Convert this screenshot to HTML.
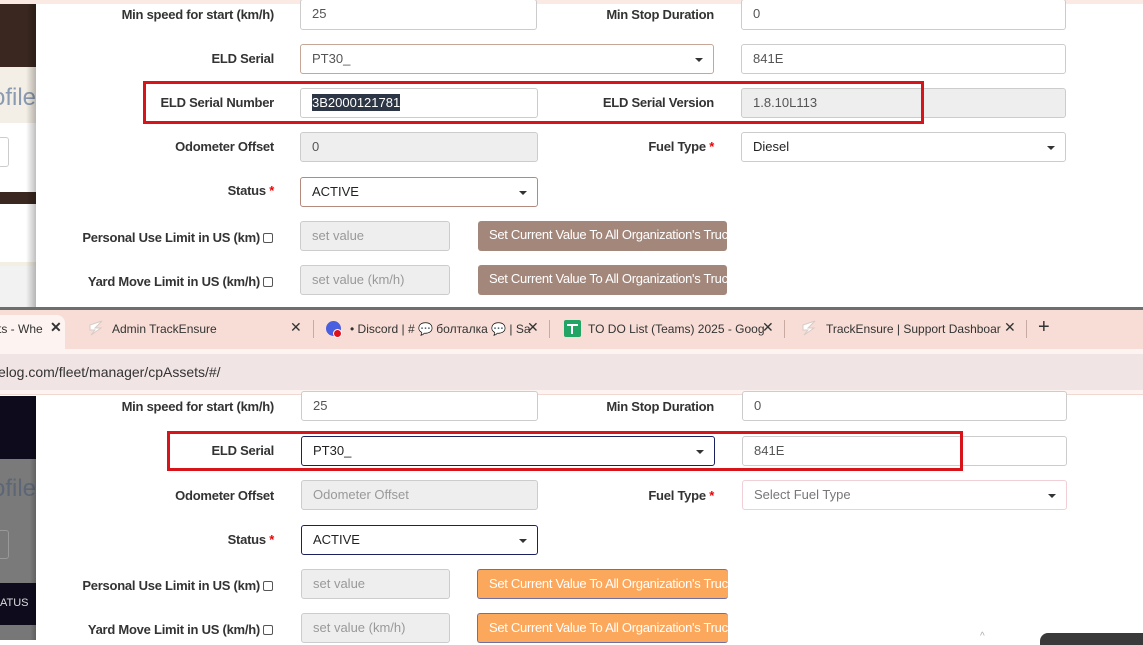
<!DOCTYPE html>
<html><head><meta charset="utf-8">
<style>
*{box-sizing:border-box;margin:0;padding:0}
body{width:1143px;height:640px;overflow:hidden;position:relative;background:#fff;font-family:"Liberation Sans",Arial,sans-serif}
.a{position:absolute}
.lbl{position:absolute;font-weight:bold;font-size:13px;color:#333;text-align:right;white-space:nowrap;letter-spacing:-0.25px}
.inp{position:absolute;height:30px;border:1px solid #ccc;border-radius:3px;font-size:13px;color:#555;padding:0 11px;line-height:28px;background:#fff;white-space:nowrap;overflow:hidden}
.dis{background:#eee}
.ph{color:#999}
.car{position:absolute;right:10px;top:13px;border-left:4px solid transparent;border-right:4px solid transparent;border-top:4px solid #333}
.btn{position:absolute;height:30px;border-radius:3px;color:#fff;font-size:13px;padding-left:11px;line-height:28px;white-space:nowrap;overflow:hidden;letter-spacing:-0.3px}
.req{color:#e00}
.cb{display:inline-block;width:10px;height:10px;border:1px solid #555;border-radius:2px;vertical-align:-1px;margin-left:3px}
.red{position:absolute;border:3px solid #d7141a}
.tab{position:absolute;top:322px;font-size:12px;color:#333;font-family:"Liberation Sans","DejaVu Sans",sans-serif;white-space:nowrap}
.x{position:absolute;top:319px;font-size:14px;color:#333}
.sep{position:absolute;top:320px;width:1px;height:18px;background:#c9aaa2}
</style></head><body>
<div class="a" style="left:0;top:0;width:1143px;height:4px;background:#fbeae3"></div>
<div class="a" style="left:0;top:4px;width:36px;height:63px;background:#3a2720"></div>
<div class="a" style="left:0;top:67px;width:36px;height:56px;background:#f3efe6"></div>
<div class="a" style="left:-8px;top:84px;font-size:24px;color:#8a9ab0">ofile</div>
<div class="a" style="left:0;top:123px;width:36px;height:69px;background:#fff"></div>
<div class="a" style="left:-10px;top:137px;width:19px;height:30px;border:1px solid #ccc;border-radius:3px"></div>
<div class="a" style="left:0;top:192px;width:36px;height:12px;background:#3a2720"></div>
<div class="a" style="left:0;top:204px;width:36px;height:58px;background:#fff"></div>
<div class="a" style="left:0;top:262px;width:36px;height:46px;background:#f2f2f2;border-top:4px solid #f4efe3"></div>
<div class="a" style="left:26px;top:4px;width:10px;height:304px;background:linear-gradient(90deg,rgba(0,0,0,0),rgba(0,0,0,.25))"></div>

<div class="lbl" style="right:869px;top:7px">Min speed for start (km/h)</div>
<div class="inp" style="left:300px;top:-1px;width:237px;height:31px">25</div>
<div class="lbl" style="right:429px;top:7px">Min Stop Duration</div>
<div class="inp" style="left:741px;top:-1px;width:325px;height:31px">0</div>

<div class="lbl" style="right:869px;top:51px">ELD Serial</div>
<div class="inp" style="left:300px;top:44px;width:414px;border-color:#c7a697">PT30_<span class="car"></span></div>
<div class="inp" style="left:741px;top:44px;width:325px">841E</div>

<div class="lbl" style="right:869px;top:95px">ELD Serial Number</div>
<div class="inp" style="left:300px;top:88px;width:238px;color:#fff"><span style="background:#2d3645;padding:1px 0">3B2000121781</span></div>
<div class="lbl" style="right:429px;top:95px">ELD Serial Version</div>
<div class="inp dis" style="left:741px;top:88px;width:325px">1.8.10L113</div>
<div class="red" style="left:143px;top:81px;width:781px;height:43px"></div>

<div class="lbl" style="right:869px;top:139px">Odometer Offset</div>
<div class="inp dis" style="left:300px;top:132px;width:238px">0</div>
<div class="lbl" style="right:429px;top:139px">Fuel Type <span class="req">*</span></div>
<div class="inp" style="left:741px;top:132px;width:325px;color:#222">Diesel<span class="car"></span></div>

<div class="lbl" style="right:869px;top:183px">Status <span class="req">*</span></div>
<div class="inp" style="left:300px;top:177px;width:238px;border-color:#b48a7c;color:#222">ACTIVE<span class="car"></span></div>

<div class="lbl" style="right:870px;top:230px">Personal Use Limit in US (km)<span class="cb"></span></div>
<div class="inp dis ph" style="left:300px;top:221px;width:150px">set value</div>
<div class="btn" style="left:478px;top:221px;width:249px;background:#a4877b">Set Current Value To All Organization's Trucks</div>

<div class="lbl" style="right:870px;top:274px">Yard Move Limit in US (km/h)<span class="cb"></span></div>
<div class="inp dis ph" style="left:300px;top:265px;width:150px">set value (km/h)</div>
<div class="btn" style="left:478px;top:265px;width:249px;background:#a4877b">Set Current Value To All Organization's Trucks</div>

<div class="a" style="left:0;top:307px;width:1143px;height:3px;background:#6e6e6e"></div>
<div class="a" style="left:0;top:310px;width:1143px;height:39px;background:#f7ddd5"></div>
<div class="a" style="left:-10px;top:315px;width:75px;height:34px;background:#fdf3f0;border-radius:0 8px 0 0"></div>
<div class="tab" style="left:-2px">ts - Whe</div>
<div class="x" style="left:50px;font-weight:bold">✕</div>
<svg class="a" style="left:87px;top:319px" width="18" height="18" viewBox="0 0 18 18"><path d="M3 6 L15 2 L8 9 L14 9 L4 16 L8 11 L3 11Z" fill="#fff" stroke="#d8cbc6" stroke-width="1"/></svg>
<div class="tab" style="left:112px">Admin TrackEnsure</div>
<div class="x" style="left:290px">✕</div>
<div class="sep" style="left:313px"></div>
<div class="a" style="left:326px;top:321px;width:15px;height:15px;border-radius:50%;background:#4a5fe0"></div>
<div class="a" style="left:333px;top:329px;width:9px;height:9px;border-radius:50%;background:#e0101a;border:1px solid #fff"></div>
<div class="tab" style="left:350px">• Discord | # 💬 болталка 💬 | Sa</div>
<div class="x" style="left:527px">✕</div>
<div class="sep" style="left:549px"></div>
<div class="a" style="left:564px;top:320px;width:17px;height:17px;border-radius:2px;background:#21a464"></div>
<div class="a" style="left:567px;top:324px;width:11px;height:2px;background:#fff"></div>
<div class="a" style="left:571px;top:324px;width:2px;height:10px;background:#fff"></div>
<div class="tab" style="left:588px">TO DO List (Teams) 2025 - Goog</div>
<div class="x" style="left:762px">✕</div>
<div class="sep" style="left:784px"></div>
<svg class="a" style="left:800px;top:319px" width="18" height="18" viewBox="0 0 18 18"><path d="M3 6 L15 2 L8 9 L14 9 L4 16 L8 11 L3 11Z" fill="#fff" stroke="#d8cbc6" stroke-width="1"/></svg>
<div class="tab" style="left:826px">TrackEnsure | Support Dashboar</div>
<div class="x" style="left:1004px">✕</div>
<div class="sep" style="left:1026px"></div>
<div class="a" style="left:1038px;top:316px;font-size:20px;color:#333">+</div>
<div class="a" style="left:0;top:349px;width:1143px;height:5px;background:#fdf3f0"></div>
<div class="a" style="left:0;top:354px;width:1143px;height:36px;background:#f1e4e4"></div>
<div class="a" style="left:-2px;top:364px;font-size:14px;color:#333">elog.com/fleet/manager/cpAssets/#/</div>
<div class="a" style="left:0;top:390px;width:1143px;height:5px;background:#fdf3f0;border-bottom:1px solid #f1d8d0"></div>

<div class="a" style="left:0;top:396px;width:36px;height:63px;background:#0e0c1c"></div>
<div class="a" style="left:0;top:459px;width:36px;height:124px;background:#7a7a7a"></div>
<div class="a" style="left:-8px;top:475px;font-size:24px;color:#5c6675">ofile</div>
<div class="a" style="left:-10px;top:530px;width:19px;height:29px;border:1px solid #999;border-radius:3px"></div>
<div class="a" style="left:0;top:583px;width:36px;height:42px;background:#0e0c1c"></div>
<div class="a" style="left:0;top:597px;font-size:11px;color:#ddd">ATUS</div>
<div class="a" style="left:0;top:625px;width:36px;height:15px;background:#777"></div>
<div class="a" style="left:30px;top:396px;width:6px;height:244px;background:linear-gradient(90deg,rgba(0,0,0,0),rgba(0,0,0,.2))"></div>

<div class="lbl" style="right:869px;top:399px">Min speed for start (km/h)</div>
<div class="inp" style="left:301px;top:391px;width:237px">25</div>
<div class="lbl" style="right:429px;top:399px">Min Stop Duration</div>
<div class="inp" style="left:742px;top:391px;width:325px">0</div>

<div class="lbl" style="right:869px;top:443px">ELD Serial</div>
<div class="inp" style="left:301px;top:436px;width:414px;border-color:#1b2060;color:#222">PT30_<span class="car"></span></div>
<div class="inp" style="left:742px;top:436px;width:325px">841E</div>
<div class="red" style="left:167px;top:431px;width:796px;height:40px"></div>

<div class="lbl" style="right:869px;top:488px">Odometer Offset</div>
<div class="inp dis ph" style="left:301px;top:480px;width:237px">Odometer Offset</div>
<div class="lbl" style="right:429px;top:488px">Fuel Type <span class="req">*</span></div>
<div class="inp ph" style="left:742px;top:480px;width:325px;border-color:#f0d0d6;color:#777">Select Fuel Type<span class="car"></span></div>

<div class="lbl" style="right:869px;top:532px">Status <span class="req">*</span></div>
<div class="inp" style="left:301px;top:525px;width:237px;border-color:#1b2060;color:#222">ACTIVE<span class="car"></span></div>

<div class="lbl" style="right:870px;top:578px">Personal Use Limit in US (km)<span class="cb"></span></div>
<div class="inp dis ph" style="left:301px;top:569px;width:149px">set value</div>
<div class="btn" style="left:477px;top:569px;width:251px;background:#fca85c;border:1px solid #6f6fa8;border-right:none">Set Current Value To All Organization's Trucks</div>

<div class="lbl" style="right:870px;top:622px">Yard Move Limit in US (km/h)<span class="cb"></span></div>
<div class="inp dis ph" style="left:301px;top:613px;width:149px">set value (km/h)</div>
<div class="btn" style="left:477px;top:613px;width:251px;background:#fca85c;border:1px solid #6f6fa8;border-right:none">Set Current Value To All Organization's Trucks</div>

<div class="a" style="left:980px;top:631px;font-size:10px;color:#aaa">^</div>
<div class="a" style="left:1040px;top:633px;width:110px;height:12px;background:#3a3a3a;border-radius:8px 0 0 0"></div>
</body></html>
